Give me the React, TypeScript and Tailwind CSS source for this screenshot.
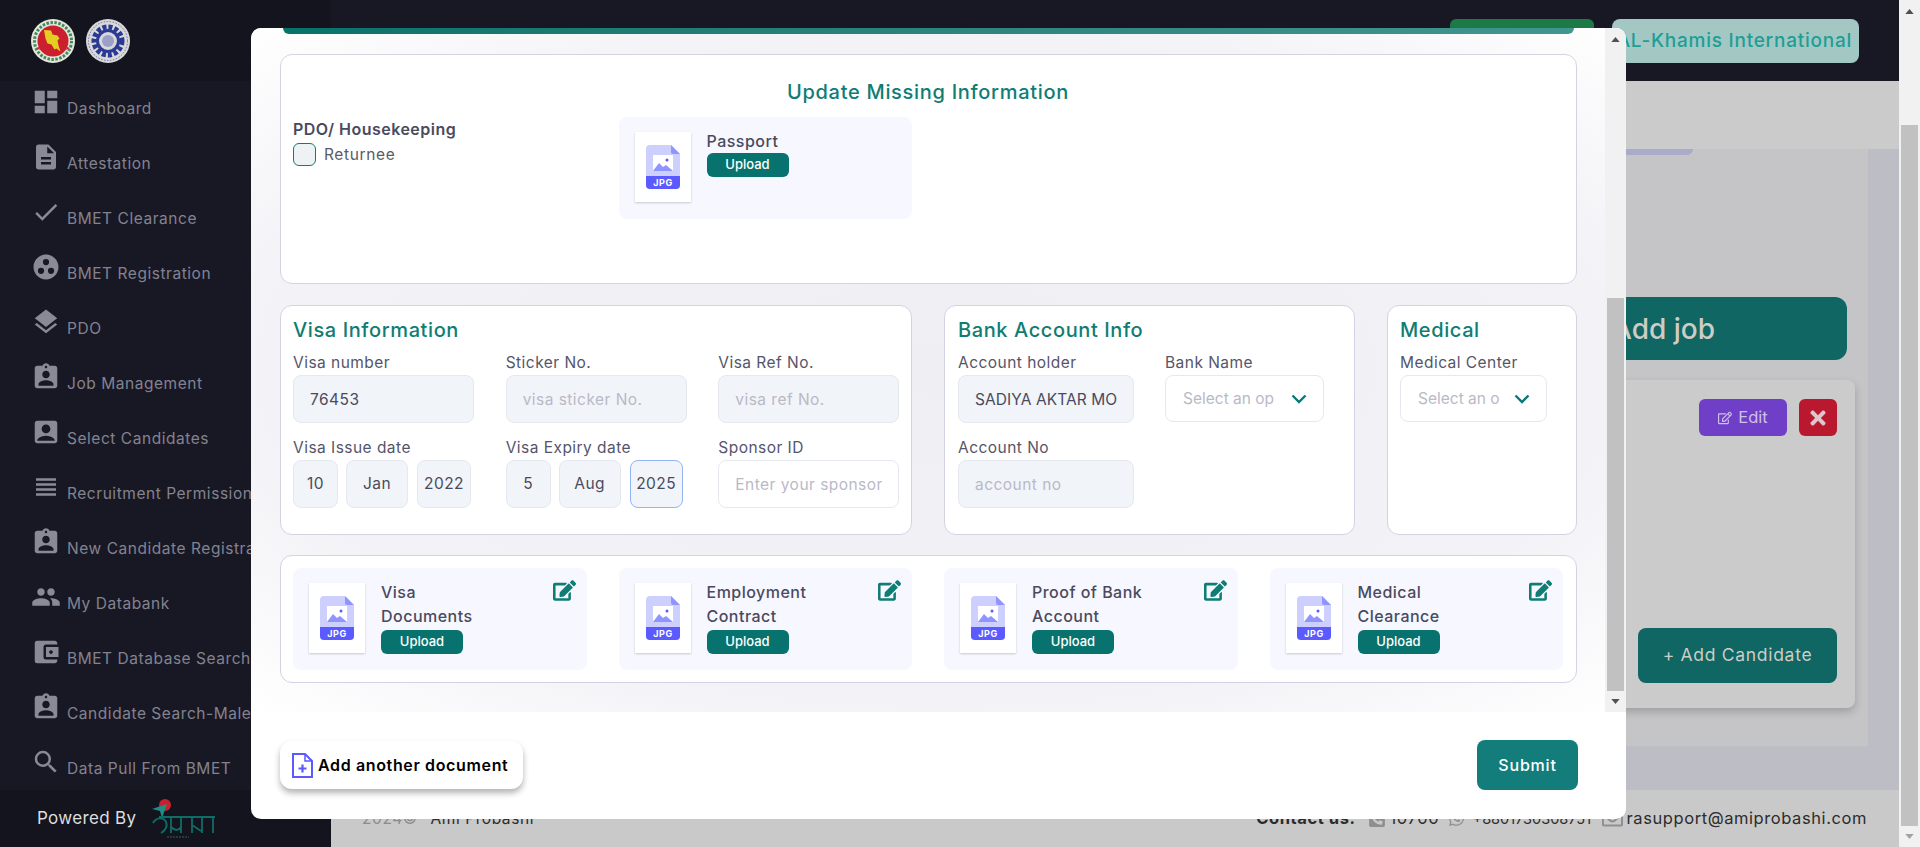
import { FaEdit, FaRegEdit, FaTimes, FaWhatsapp, FaPhoneSquareAlt, FaRegEnvelope } from 'react-icons/fa';
import {
  MdDashboard,
  MdDescription,
  MdCheck,
  MdGroupWork,
  MdLayers,
  MdAssignmentInd,
  MdAccountBox,
  MdViewHeadline,
  MdPeople,
  MdAccountBalanceWallet,
  MdSearch,
} from 'react-icons/md';

const navItems = [
  { label: 'Dashboard', icon: MdDashboard },
  { label: 'Attestation', icon: MdDescription },
  { label: 'BMET Clearance', icon: MdCheck },
  { label: 'BMET Registration', icon: MdGroupWork },
  { label: 'PDO', icon: MdLayers },
  { label: 'Job Management', icon: MdAssignmentInd },
  { label: 'Select Candidates', icon: MdAccountBox },
  { label: 'Recruitment Permission', icon: MdViewHeadline },
  { label: 'New Candidate Registration', icon: MdAssignmentInd },
  { label: 'My Databank', icon: MdPeople },
  { label: 'BMET Database Search', icon: MdAccountBalanceWallet },
  { label: 'Candidate Search-Male', icon: MdAssignmentInd },
  { label: 'Data Pull From BMET', icon: MdSearch },
];

const docs = [
  { lines: ['Visa', 'Documents'] },
  { lines: ['Employment', 'Contract'] },
  { lines: ['Proof of Bank', 'Account'] },
  { lines: ['Medical', 'Clearance'] },
];

function JpgIcon() {
  return (
    <svg viewBox="0 0 34 44" className="w-[34px] h-[44px]">
      <path d="M4 0h21l9 9v31a4 4 0 0 1-4 4H4a4 4 0 0 1-4-4V4a4 4 0 0 1 4-4z" fill="#cdd0ff" />
      <path d="M25 0l9 9h-7a2 2 0 0 1-2-2z" fill="#8f94ff" />
      <path d="M0 31h34v9a4 4 0 0 1-4 4H4a4 4 0 0 1-4-4z" fill="#5a5aff" />
      <rect x="7" y="10" width="20" height="16" fill="#fff" />
      <path d="M7 26l6-8 4 4 3-2 7 6z" fill="#8f94ff" />
      <circle cx="21" cy="15" r="1.5" fill="#5a5aff" />
      <text x="17" y="41" textAnchor="middle" fontSize="9" fontWeight="700" fill="#fff" fontFamily="Inter, sans-serif" letterSpacing="0.6">
        JPG
      </text>
    </svg>
  );
}

function UploadBlock({ lines, editable }: { lines: string[]; editable?: boolean }) {
  return (
    <div className="relative h-[102px] rounded-lg bg-[#f7f7ff] pl-4 pt-[15px] flex gap-4">
      <div className="w-[56px] h-[70px] bg-white shadow-[0_1px_2px_rgba(0,0,0,0.2)] flex items-center justify-center">
        <JpgIcon />
      </div>
      <div className="-mt-[3px]">
        {lines.map((l) => (
          <div key={l} className="text-[16px] leading-6 font-medium text-[#4a4a5e] tracking-[0.03em] whitespace-nowrap">
            {l}
          </div>
        ))}
        <button className={`${lines.length > 1 ? 'mt-[2px]' : ''} block w-[82px] h-6 rounded-md bg-[#07726e] text-white text-[13px] font-medium`}>
          Upload
        </button>
      </div>
      {editable && <FaEdit className="absolute right-[11px] top-[12px] w-[23px] h-[21px] text-[#0f7d74]" />}
    </div>
  );
}

function Label({ children }: { children: string }) {
  return <div className="text-[15.5px] leading-6 text-[#55556a] tracking-[0.03em]">{children}</div>;
}

function TextInput({ value, placeholder, filled = true, width }: { value?: string; placeholder?: string; filled?: boolean; width: string }) {
  return (
    <input
      readOnly
      value={value}
      placeholder={placeholder}
      className={`${width} h-[48px] rounded-lg border border-[#e6e8f0] px-4 text-[15.5px] text-[#4a4a5e] tracking-[0.03em] placeholder:text-[#b9b9c8] outline-none ${filled ? 'bg-[#f1f4f8]' : 'bg-white'}`}
    />
  );
}

function DateBox({ value, width, active }: { value: string; width: string; active?: boolean }) {
  return (
    <div className={`${width} h-[48px] rounded-lg border flex items-center justify-center text-[15.5px] tracking-[0.03em] text-[#4a4a5e] bg-[#f1f4f8] ${active ? 'border-[#93b4f5]' : 'border-[#e6e8f0]'}`}>
      {value}
    </div>
  );
}

function SelectBox({ width, text }: { width: string; text: string }) {
  return (
    <div className={`${width} h-[47px] rounded-lg border border-[#e6e8f0] bg-white flex items-center pl-[17px] pr-4`}>
      <span className="flex-1 whitespace-nowrap text-[15.5px] text-[#b9b9c8]">{text}</span>
      <svg viewBox="0 0 16 10" className="w-4 h-[10px] shrink-0" fill="none" stroke="#067a78" strokeWidth="2.4">
        <path d="M1.5 1.5L8 8l6.5-6.5" />
      </svg>
    </div>
  );
}

function SectionTitle({ children }: { children: string }) {
  return <h3 className="text-[20px] leading-7 font-medium text-[#0f7d74] tracking-[0.03em] mb-[7px]">{children}</h3>;
}

function Arrow({ up, color = '#505050' }: { up?: boolean; color?: string }) {
  return (
    <svg viewBox="0 0 10 6" className="w-[9px] h-[5px]">
      <polygon points={up ? '5,0 10,6 0,6' : '0,0 10,0 5,6'} fill={color} />
    </svg>
  );
}

function Sidebar() {
  return (
    <aside className="w-[331px] h-full shrink-0 flex flex-col bg-[#181825]">
      <div className="h-[81px] shrink-0 bg-[#14141f] flex items-center gap-[11px] pl-[31px]">
        <svg viewBox="0 0 44 44" className="w-11 h-11">
          <circle cx="22" cy="22" r="22" fill="#e4e6dc" />
          <circle cx="22" cy="22" r="18.5" fill="none" stroke="#3f8a5c" strokeWidth="3" strokeDasharray="2.5 1.5" />
          <circle cx="22" cy="22" r="15.5" fill="#cc1f2e" />
          <path d="M13 11l7 .5 1.5 4 5 1 2 3-2 2 1 5 2 6-4-3-2 1-3-5-4-1-2-5z" fill="#e2cf22" />
          <path d="M5 29l3-1 1 3zM39 29l-3-1-1 3z" fill="#cc1f2e" />
        </svg>
        <svg viewBox="0 0 44 44" className="w-11 h-11">
          <circle cx="22" cy="22" r="22" fill="#d8d8d8" />
          <circle cx="22" cy="22" r="14" fill="none" stroke="#2a3a94" strokeWidth="5" strokeDasharray="4 2" />
          <circle cx="22" cy="22" r="10.5" fill="none" stroke="#2a3a94" strokeWidth="3" />
          <circle cx="22" cy="22" r="6" fill="#9aa0c8" />
          <circle cx="22" cy="22" r="19.5" fill="none" stroke="#6a70a8" strokeWidth="1" strokeDasharray="1.5 1.5" />
        </svg>
      </div>
      <nav className="h-[709px] shrink-0 overflow-hidden">
        {navItems.map(({ label, icon: Icon }) => (
          <div key={label} className="h-[55px] flex pl-[31px] gap-[6px] whitespace-nowrap">
            <Icon className="w-[30px] h-[30px] mt-[6px] text-[#8a8a96] shrink-0" />
            <span className="mt-[17px] text-[15.5px] leading-[22px] text-[#83838f] tracking-[0.035em]">{label}</span>
          </div>
        ))}
      </nav>
      <div className="h-[57px] shrink-0 bg-[#14141f] flex items-center pl-[37px] gap-[14px]">
        <span className="text-[17px] text-[#dedede] tracking-[0.02em]">Powered By</span>
        <svg viewBox="0 0 68 40" className="w-[68px] h-[40px]" fill="none" stroke="#0e6d66" strokeWidth="1.8">
          <circle cx="15" cy="6" r="6" fill="#c8202f" stroke="none" />
          <path d="M2 10l15-5-5 14-2-7z" fill="#1e8f84" stroke="none" />
          <path d="M3 24c3-6 11-6 13-1 2 4-1 9-5 11M9 18h56M21 18v16M31 18v16M42 18v16M52 18v16M63 18v16M21 28c4 4 7 4 10 0M42 26l9 6" />
          <path d="M17 38h22" stroke="#3a5a5a" strokeWidth="1" strokeDasharray="2 1" />
        </svg>
      </div>
    </aside>
  );
}

function PageBehind() {
  return (
    <main className="flex-1 h-full flex flex-col min-w-0 bg-[#bdbdc6]">
      <header className="h-[81px] shrink-0 bg-[#181825] flex items-center justify-end gap-[18px] pr-[40px]">
        <div className="w-[144px] h-11 rounded-md bg-[#1b7a46]" />
        <div className="w-[247px] h-11 rounded-lg bg-[#a3c8c4] flex items-center justify-end pr-[7px] pt-[2px] text-[19px] text-[#1f9e94] font-medium tracking-[0.04em] whitespace-nowrap overflow-hidden">
          AL-Khamis International
        </div>
      </header>
      <div className="h-[68px] shrink-0 bg-[#cbcbcb]" />
      <div className="flex-1 min-h-0 pr-[31px] pb-[44px]">
        <div className="h-full bg-[#c5c5c8] flex flex-col items-end">
          <div className="h-[6px] w-[1362px] mr-[175px] self-end rounded-br-xl bg-[#aaaacb]" />
          <button className="mt-[142px] mr-[21px] w-[300px] h-[63px] rounded-xl bg-[#0f6663] text-[28px] font-medium text-[#cdcdc5] text-left pl-[65px]">
            Add job
          </button>
          <div className="mt-5 mr-[13px] w-[1300px] h-[328px] rounded-lg bg-[#cbcbcb] shadow-[0_4px_8px_rgba(0,0,0,0.2)] flex flex-col items-end pt-[19px] pr-[18px] pb-[25px]">
            <div className="flex gap-3">
              <button className="w-[88px] h-[37px] rounded-md bg-[#6f3fc8] text-[#cfc0e8] text-[16.5px] flex items-center justify-center gap-[6px]">
                <FaRegEdit className="w-[14px] h-[14px]" />
                Edit
              </button>
              <button className="w-[38px] h-[37px] rounded-md bg-[#b9182e] text-[#dcc8cc] flex items-center justify-center">
                <FaTimes className="w-[22px] h-[22px]" />
              </button>
            </div>
            <button className="mt-auto w-[199px] h-[55px] rounded-lg bg-[#0f6663] text-[#cdcdc5] text-[17.5px] tracking-[0.04em]">
              + Add Candidate
            </button>
          </div>
        </div>
      </div>
      <footer className="h-[57px] shrink-0 bg-[#c9c9c9] flex items-center justify-between pl-[31px] pr-[32px] text-[16.5px] tracking-[0.035em] text-[#2c2c2c]">
        <div className="text-[15.5px]">
          <span className="text-[#8c8c8c]">2024©</span> <span className="ml-2">Ami Probashi</span>
        </div>
        <div className="flex items-center">
          <span className="font-bold mr-3">Contact us:</span>
          <FaPhoneSquareAlt className="text-[#8f8f8f] w-[18px] h-[18px]" />
          <span className="ml-1 w-[58px]">10700</span>
          <FaWhatsapp className="text-[#8f8f8f] w-[17px] h-[17px]" />
          <span className="ml-2 w-[129px] text-[14.5px] tracking-normal">+8801730308751</span>
          <FaRegEnvelope className="text-[#8f8f8f] w-[21px] h-[21px]" />
          <span className="ml-1">rasupport@amiprobashi.com</span>
        </div>
      </footer>
    </main>
  );
}

function Modal() {
  return (
    <div className="absolute left-[251px] top-[28px] w-[1375px] h-[791px] rounded-[10px] overflow-hidden bg-white flex flex-col">
      <div className="h-[684px] shrink-0 flex bg-[radial-gradient(ellipse_at_center,#eeeef3_0%,#f3f3f7_70%,#ffffff_100%)]">
        <div className="flex-1 min-w-0 pl-[29px] pr-[28px]">
          <div className="mx-[3px] h-[6px] rounded-b-xl bg-gradient-to-r from-[#06736b] to-[#43958f]" />
          <section className="mt-5 h-[230px] rounded-xl border border-[#d3d3e4] bg-white pt-[25px] pl-3 pr-[13px]">
            <h2 className="text-center text-[20px] leading-6 font-medium text-[#0f7d74] tracking-[0.035em]">Update Missing Information</h2>
            <div className="mt-[13px] grid grid-cols-4 gap-x-8">
              <div>
                <div className="text-[16px] leading-6 font-semibold text-[#4a4a5e] tracking-[0.03em]">PDO/ Housekeeping</div>
                <label className="mt-[2px] flex items-center gap-2 text-[15.5px] text-[#5a5a68] tracking-[0.04em]">
                  <span className="w-[23px] h-[23px] rounded-md border border-[#0f7d74] bg-[#eef2f5]" />
                  Returnee
                </label>
              </div>
              <UploadBlock lines={['Passport']} />
            </div>
          </section>

          <div className="mt-[21px] grid grid-cols-[632px_411px_1fr] gap-x-8">
            <section className="h-[230px] rounded-xl border border-[#d3d3e4] bg-white px-3 pt-[10px]">
              <SectionTitle>Visa Information</SectionTitle>
              <div className="grid grid-cols-3 gap-x-8 gap-y-[13px]">
                <div>
                  <Label>Visa number</Label>
                  <TextInput value="76453" width="w-[181px]" />
                </div>
                <div>
                  <Label>Sticker No.</Label>
                  <TextInput placeholder="visa sticker No." width="w-[181px]" />
                </div>
                <div>
                  <Label>Visa Ref No.</Label>
                  <TextInput placeholder="visa ref No." width="w-[181px]" />
                </div>
                <div>
                  <Label>Visa Issue date</Label>
                  <div className="flex gap-2">
                    <DateBox value="10" width="w-[45px]" />
                    <DateBox value="Jan" width="w-[62px]" />
                    <DateBox value="2022" width="w-[54px] ml-[1px]" />
                  </div>
                </div>
                <div>
                  <Label>Visa Expiry date</Label>
                  <div className="flex gap-2">
                    <DateBox value="5" width="w-[45px]" />
                    <DateBox value="Aug" width="w-[62px]" />
                    <DateBox value="2025" width="w-[53px] ml-[1px]" active />
                  </div>
                </div>
                <div>
                  <Label>Sponsor ID</Label>
                  <TextInput placeholder="Enter your sponsor ID" filled={false} width="w-[181px]" />
                </div>
              </div>
            </section>

            <section className="h-[230px] rounded-xl border border-[#d3d3e4] bg-white px-[13px] pt-[10px]">
              <SectionTitle>Bank Account Info</SectionTitle>
              <div className="grid grid-cols-[176px_159px] gap-x-[31px] gap-y-[13px]">
                <div>
                  <Label>Account holder</Label>
                  <TextInput value="SADIYA AKTAR MO" width="w-[176px] tracking-[0.005em]!" />
                </div>
                <div>
                  <Label>Bank Name</Label>
                  <SelectBox width="w-[159px]" text="Select an op" />
                </div>
                <div>
                  <Label>Account No</Label>
                  <TextInput placeholder="account no" width="w-[176px]" />
                </div>
              </div>
            </section>

            <section className="h-[230px] rounded-xl border border-[#d3d3e4] bg-white px-3 pt-[10px]">
              <SectionTitle>Medical</SectionTitle>
              <Label>Medical Center</Label>
              <SelectBox width="w-[147px]" text="Select an o" />
            </section>
          </div>

          <section className="mt-5 h-[128px] rounded-xl border border-[#d3d3e4] bg-white pl-3 pr-[13px] pt-3">
            <div className="grid grid-cols-4 gap-x-8">
              {docs.map((d) => (
                <UploadBlock key={d.lines[0]} lines={d.lines} editable />
              ))}
            </div>
          </section>
        </div>
        <div className="w-[21px] shrink-0 bg-[#f1f1f1] flex flex-col items-center">
          <div className="h-[21px] flex items-center justify-center pt-[2px]">
            <Arrow up />
          </div>
          <div className="mt-[249px] w-[17px] flex-1 bg-[#c1c1c1]" />
          <div className="h-[21px] flex items-center justify-center">
            <Arrow />
          </div>
        </div>
      </div>
      <div className="flex-1 flex items-center justify-between pl-[29px] pr-[48px] pb-[1px]">
        <button className="w-[243px] h-[48px] rounded-xl bg-white shadow-[0_4px_6px_rgba(0,0,0,0.3)] flex items-center pl-3 gap-[5px] text-[16px] font-semibold text-black tracking-[0.04em] whitespace-nowrap">
          <svg viewBox="0 0 21 25" className="w-[21px] h-[25px] shrink-0">
            <path d="M1 1h12l7 7v16H1z" fill="#fff" stroke="#5a5aff" strokeWidth="2" />
            <path d="M13 1v7h7" fill="none" stroke="#5a5aff" strokeWidth="1.5" />
            <path d="M10.5 11.5v8M6.5 15.5h8" stroke="#5a5aff" strokeWidth="2.2" />
          </svg>
          Add another document
        </button>
        <button className="w-[101px] h-[50px] rounded-lg bg-[#127d7a] text-white text-[16px] font-medium tracking-[0.05em]">Submit</button>
      </div>
    </div>
  );
}

export default function App() {
  return (
    <div className="relative h-[847px] w-full overflow-hidden flex font-[Inter,sans-serif]">
      <Sidebar />
      <PageBehind />
      <div className="w-[21px] shrink-0 h-full bg-[#f1f1f1] flex flex-col items-center">
        <div className="h-[21px] flex items-center justify-center pt-[2px]">
          <Arrow up />
        </div>
        <div className="mt-[104px] w-[17px] flex-1 bg-[#c1c1c1]" />
        <div className="h-[21px] flex items-center justify-center">
          <Arrow color="#a3a3a3" />
        </div>
      </div>
      <Modal />
    </div>
  );
}
